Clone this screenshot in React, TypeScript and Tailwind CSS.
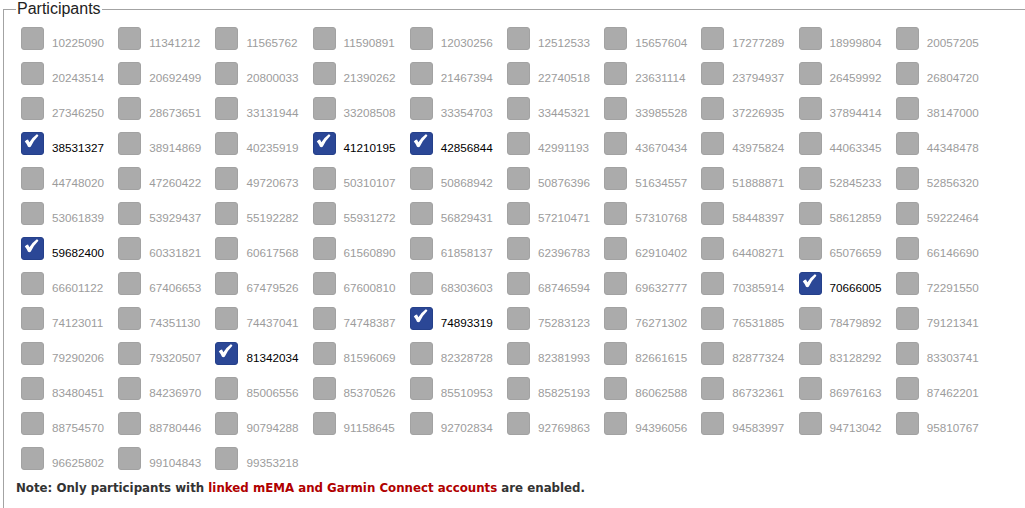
import React from "react";

const rows: string[][] = [
  ["10225090", "11341212", "11565762", "11590891", "12030256", "12512533", "15657604", "17277289", "18999804", "20057205"],
  ["20243514", "20692499", "20800033", "21390262", "21467394", "22740518", "23631114", "23794937", "26459992", "26804720"],
  ["27346250", "28673651", "33131944", "33208508", "33354703", "33445321", "33985528", "37226935", "37894414", "38147000"],
  ["38531327", "38914869", "40235919", "41210195", "42856844", "42991193", "43670434", "43975824", "44063345", "44348478"],
  ["44748020", "47260422", "49720673", "50310107", "50868942", "50876396", "51634557", "51888871", "52845233", "52856320"],
  ["53061839", "53929437", "55192282", "55931272", "56829431", "57210471", "57310768", "58448397", "58612859", "59222464"],
  ["59682400", "60331821", "60617568", "61560890", "61858137", "62396783", "62910402", "64408271", "65076659", "66146690"],
  ["66601122", "67406653", "67479526", "67600810", "68303603", "68746594", "69632777", "70385914", "70666005", "72291550"],
  ["74123011", "74351130", "74437041", "74748387", "74893319", "75283123", "76271302", "76531885", "78479892", "79121341"],
  ["79290206", "79320507", "81342034", "81596069", "82328728", "82381993", "82661615", "82877324", "83128292", "83303741"],
  ["83480451", "84236970", "85006556", "85370526", "85510953", "85825193", "86062588", "86732361", "86976163", "87462201"],
  ["88754570", "88780446", "90794288", "91158645", "92702834", "92769863", "94396056", "94583997", "94713042", "95810767"],
  ["96625802", "99104843", "99353218"],
];

// participants that are linked (enabled + selected)
const checked = new Set(["38531327", "41210195", "42856844", "59682400", "70666005", "74893319", "81342034"]);

function Box({ on }: { on: boolean }) {
  if (!on) {
    return <div className="w-[23px] h-[23px] shrink-0 rounded-[3px] bg-[#ababab] border border-[#a2a2a2]" />;
  }
  return (
    <div className="w-[23px] h-[23px] shrink-0 rounded-[3px] bg-[#2b4796] border border-[#25408a]">
      <svg width="21" height="21" viewBox="0 0 21 21" className="block">
        <path
          d="M2.8 8.4 Q4.4 6.7 6 6.5 L7.4 9.3 Q10.6 4.3 14.8 1.3 Q16 1.7 16.4 2.8 Q12 7 8.7 13.8 Q7.3 14.6 6 13.8 Q4.8 10.6 2.8 8.4 Z"
          fill="#fff"
        />
      </svg>
    </div>
  );
}

export default function App() {
  return (
    <div className="w-full h-[508px] overflow-hidden bg-white" style={{ fontFamily: '"Liberation Sans", Arial, sans-serif' }}>
      <fieldset className="ml-[3px] w-[1060px] border border-[#a3a3a3] pl-[12px] pb-[20px]">
        <legend className="px-[1px] text-[16px] leading-[18px] text-[#222]">Participants</legend>

        <div className="pl-[5px] pt-[9px]">
          {rows.map((r, i) => (
            <div key={i} className="grid grid-cols-[repeat(10,97.2px)] h-[35px]">
              {r.map((id) => {
                const on = checked.has(id);
                return (
                  <div key={id} className="flex items-start">
                    <Box on={on} />
                    <span
                      className={[
                        "ml-[8px] mt-[8px] text-[11.7px] leading-4",
                        on ? "text-black" : "text-[#9c9c9c]",
                      ].join(" ")}
                    >
                      {id}
                    </span>
                  </div>
                );
              })}
            </div>
          ))}
        </div>

        <p
          className="-mt-[2px] text-[11.8px] leading-4 font-bold text-[#333]"
          style={{ fontFamily: '"DejaVu Sans", Verdana, sans-serif' }}
        >
          Note: Only participants with{" "}
          <span className="text-[#b00000]">linked mEMA and Garmin Connect accounts</span> are enabled.
        </p>
      </fieldset>
    </div>
  );
}
